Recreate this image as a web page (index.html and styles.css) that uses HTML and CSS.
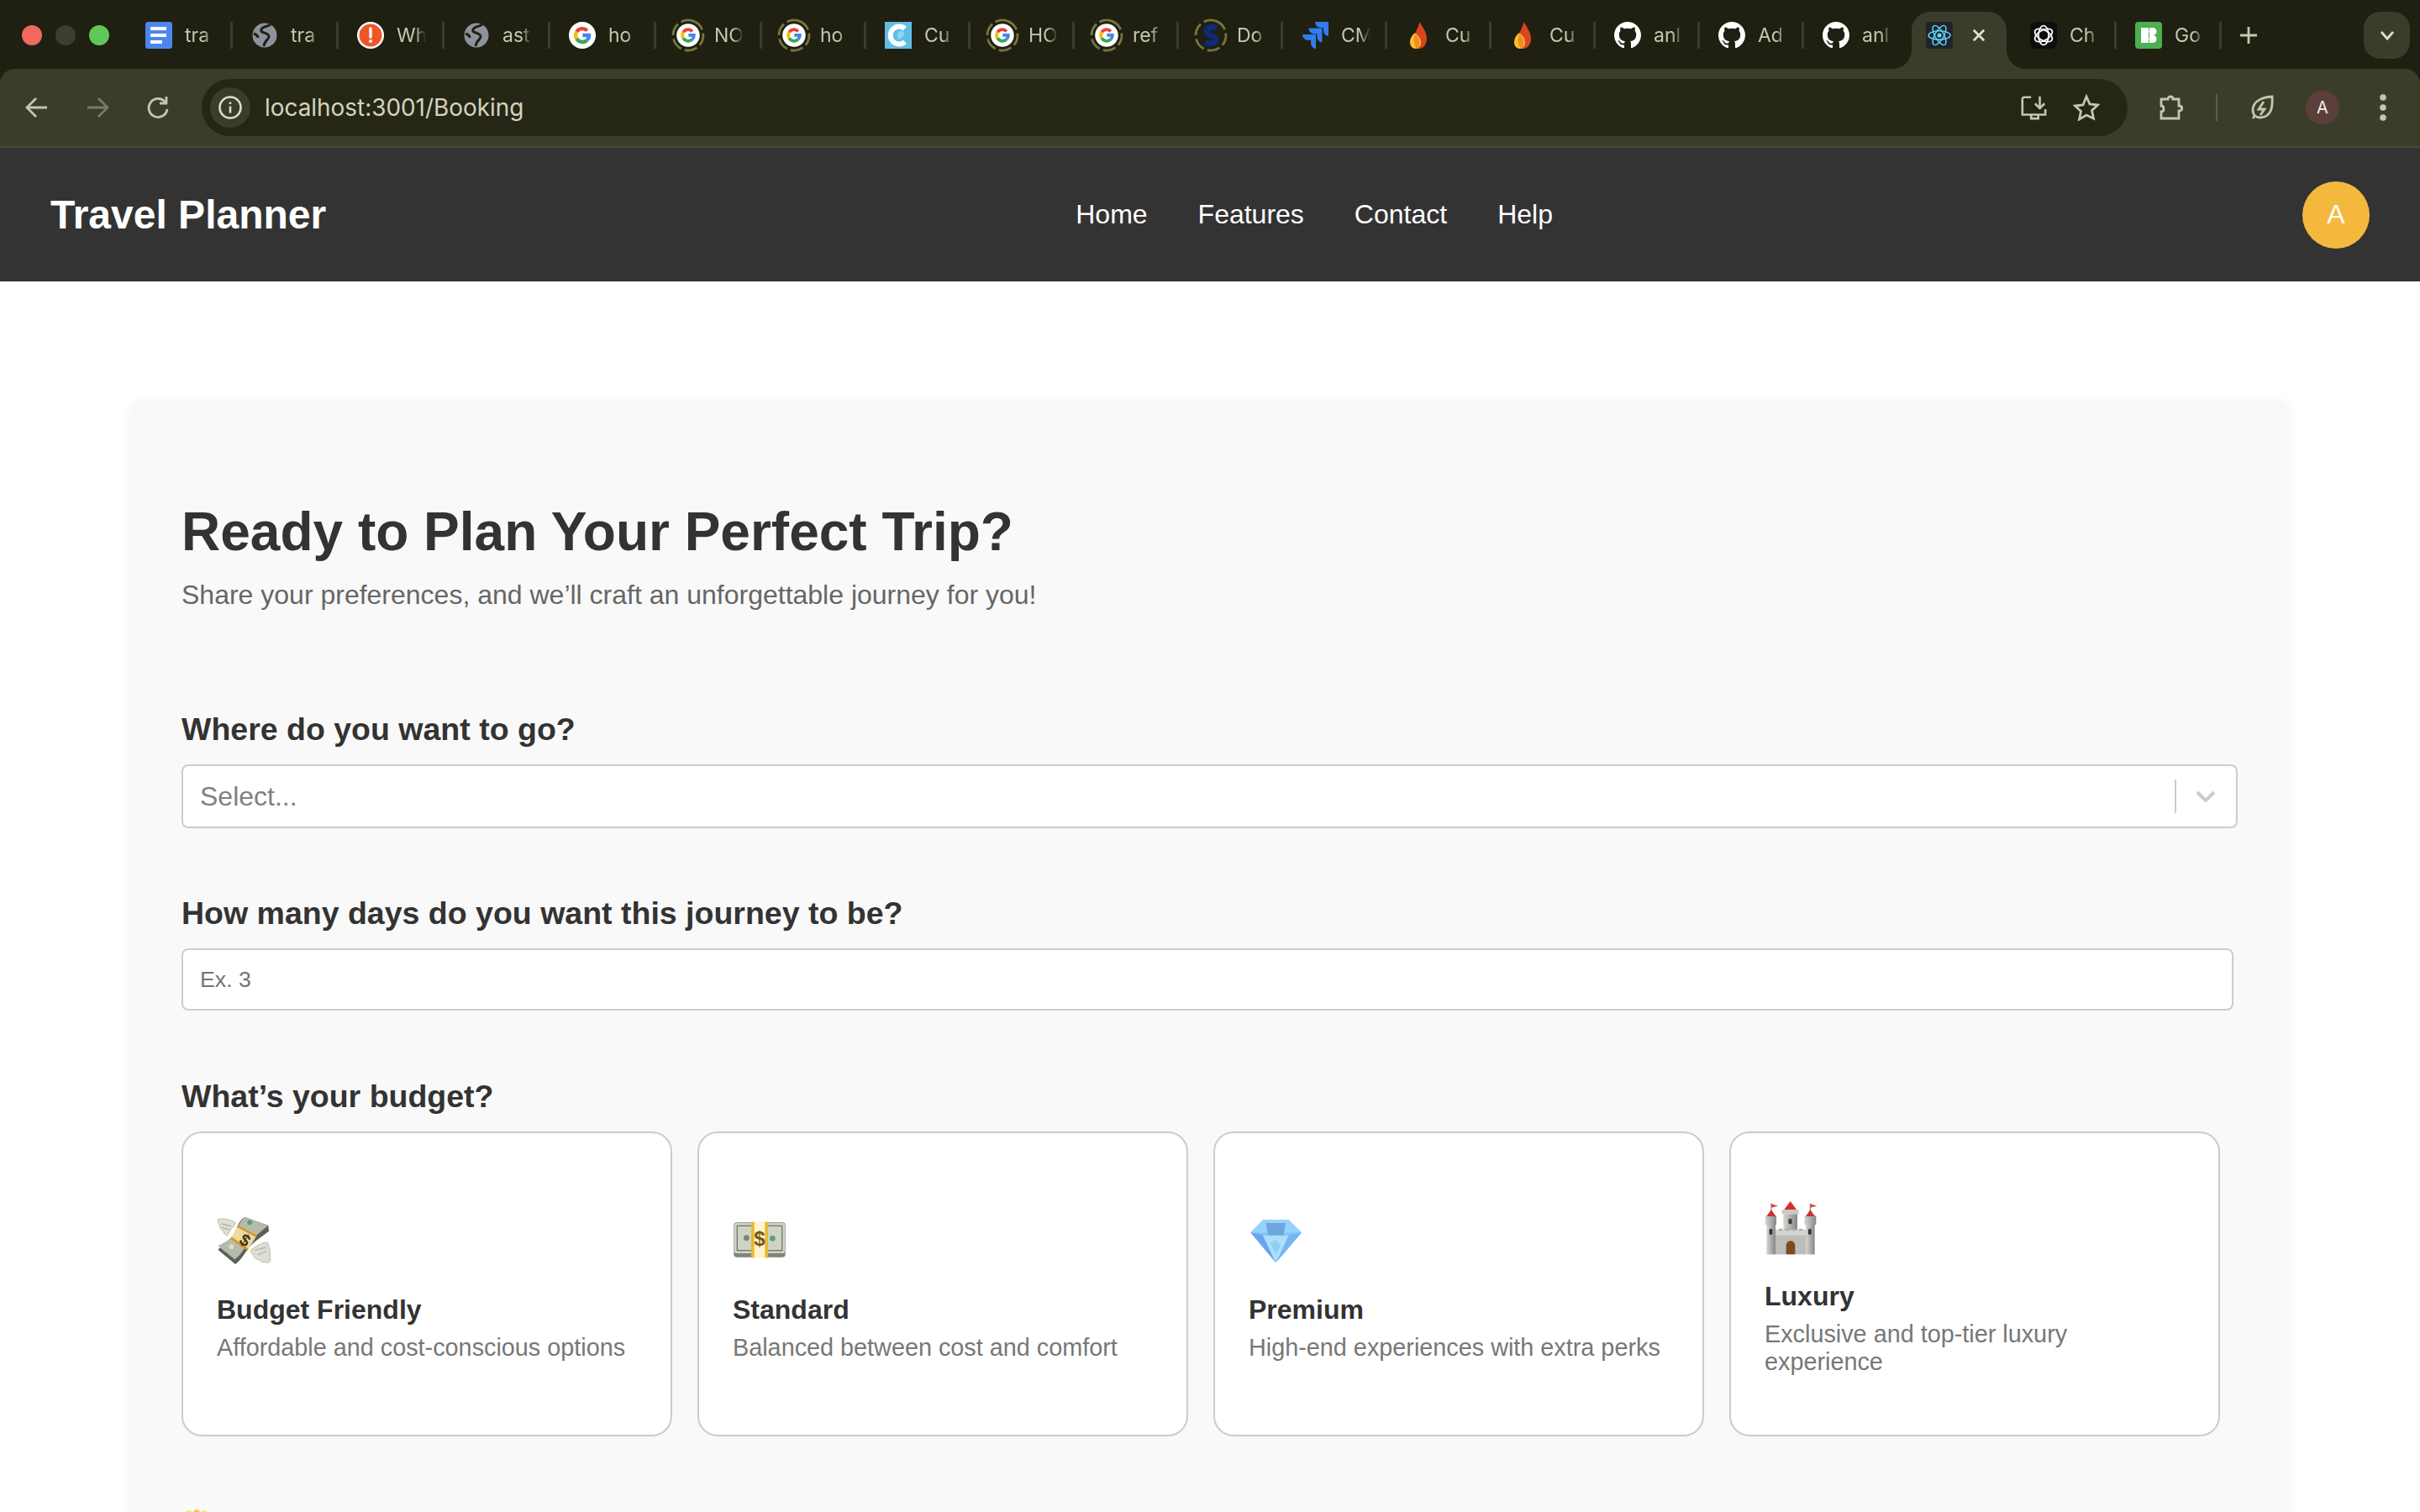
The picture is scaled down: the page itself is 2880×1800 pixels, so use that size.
FILE: index.html
```html
<!DOCTYPE html>
<html>
<head>
<meta charset="utf-8">
<title>Travel Planner</title>
<link rel="stylesheet" href="styles.css">
</head>
<body>

<svg class="icon-defs" width="0" height="0">
	<defs>
		<g id="i-docs">
			<rect width="32" height="32" rx="3" fill="#4d86ee"/>
			<rect x="6" y="6" width="19" height="4" fill="#fff"/>
			<rect x="6" y="14" width="19" height="4" fill="#fff"/>
			<rect x="6" y="22" width="14" height="4" fill="#fff"/>
		</g>
		<g id="i-globe">
			<circle cx="16" cy="16" r="14.500" fill="#8d929c"/>
			<path d="M23 3c-3 3-9 2-11 6-2 5 8 3 9 8 1 4-5 4-6 12M3 14c3 1 5 2 5 5" fill="none" stroke="#1f2011" stroke-width="3"/>
		</g>
		<g id="i-alert">
			<circle cx="16" cy="16" r="16" fill="#fff"/>
			<circle cx="16" cy="16" r="13.500" fill="#ef5527"/>
			<path d="M16 8v10" stroke="#fff" stroke-width="3.400" stroke-linecap="round"/>
			<circle cx="16" cy="23" r="2" fill="#fff"/>
		</g>
		<g id="i-google">
			<circle cx="16" cy="16" r="16" fill="#fff"/>
			<g fill="none" stroke-width="4.400">
				<path d="M9.300 11.800A8 8 0 0 1 21.800 10.600" stroke="#ea4335"/>
				<path d="M9.300 11.800A8 8 0 0 0 9.300 20.200" stroke="#fbbc05"/>
				<path d="M9.300 20.200A8 8 0 0 0 21.600 21.800" stroke="#34a853"/>
				<path d="M21.600 21.800A8 8 0 0 0 24 16H16.400" stroke="#4285f4"/>
			</g>
		</g>
		<circle id="i-ring" cx="16" cy="16" r="18" fill="none" stroke="#75773f" stroke-width="2.800" stroke-dasharray="15 4.500" transform="rotate(-70 16 16)"/>
		<g id="i-google-ring">
			<use href="#i-ring"/>
			<use href="#i-google" transform="translate(2.200 2.200) scale(0.86)"/>
		</g>
		<g id="i-cloud">
			<rect width="32" height="32" fill="#62bde4"/>
			<path d="M24 8A10.500 10.500 0 1 0 24 24" fill="none" stroke="#fff" stroke-width="6"/>
			<path d="M16 13c2-3 6-3 7 0 1 3-3 6-6 8-2-2-3-5-1-8z" fill="#8ed6ee"/>
		</g>
		<g id="i-sdoc">
			<path d="M23 8c-4-3-12-2-12 3 0 6 11 5 11 10 0 5-8 6-13 3" fill="none" stroke="#0e2a78" stroke-width="7"/>
		</g>
		<g id="i-jira">
			<path d="M32 0H16c0 4 3 7 7 7h3v3c0 4 3 7 6 7z" fill="#2f7bf0"/>
			<path d="M24.500 7.500H8.500c0 4 3 7 7 7h3v3c0 4 3 7 6 7z" fill="#2f7bf0"/>
			<path d="M17 15H1c0 4 3 7 7 7h3v3c0 4 3 7 6 7z" fill="#2f7bf0"/>
		</g>
		<g id="i-flame">
			<path d="M17 0c2 6 8 11 8 20 0 7-4 12-10 12-5 0-8-4-8-8z" fill="#d8451f"/>
			<path d="M11 13c4 3 7 7 7 12 0 4-3 7-6 7-4 0-7-3-7-8 0-4 2-8 6-11z" fill="#fbc02d"/>
			<path d="M11.500 14c3 3 5 7 5 11 0 3-1 5-3 7-2-2-4-6-4-10 0-3 1-6 2-8z" fill="#f28c28"/>
		</g>
		<g id="i-github">
			<path transform="scale(2)" fill="#fff" d="M8 0C3.580 0 0 3.580 0 8c0 3.540 2.290 6.530 5.470 7.590.4.070.55-.17.55-.38 0-.19-.01-.82-.01-1.490-2.010.37-2.530-.49-2.690-.94-.09-.23-.48-.94-.82-1.130-.28-.15-.68-.52-.01-.53.63-.01 1.080.58 1.230.82.72 1.210 1.870.87 2.330.66.07-.52.28-.87.51-1.070-1.780-.2-3.640-.89-3.640-3.950 0-.87.31-1.590.82-2.150-.08-.2-.36-1.020.08-2.120 0 0 .67-.21 2.200.82.64-.18 1.320-.27 2-.27.68 0 1.360.09 2 .27 1.530-1.040 2.200-.82 2.200-.82.44 1.100.16 1.920.08 2.120.51.56.82 1.270.82 2.150 0 3.070-1.870 3.750-3.650 3.950.29.25.54.73.54 1.480 0 1.070-.01 1.930-.01 2.200 0 .21.15.46.55.38A8.013 8.013 0 0 0 16 8c0-4.420-3.580-8-8-8z"/>
		</g>
		<g id="i-react">
			<rect width="32" height="32" rx="3" fill="#20232a"/>
			<g fill="none" stroke="#61dafb" stroke-width="1.400">
				<ellipse cx="16" cy="16" rx="13" ry="5.200"/>
				<ellipse cx="16" cy="16" rx="13" ry="5.200" transform="rotate(60 16 16)"/>
				<ellipse cx="16" cy="16" rx="13" ry="5.200" transform="rotate(120 16 16)"/>
			</g>
			<circle cx="16" cy="16" r="2.600" fill="#61dafb"/>
		</g>
		<g id="i-chat">
			<rect width="32" height="32" rx="7" fill="#0d0d0d"/>
			<g fill="none" stroke="#fff" stroke-width="1.700">
				<ellipse cx="16" cy="16" rx="6" ry="11.500"/>
				<ellipse cx="16" cy="16" rx="6" ry="11.500" transform="rotate(60 16 16)"/>
				<ellipse cx="16" cy="16" rx="6" ry="11.500" transform="rotate(120 16 16)"/>
			</g>
		</g>
		<g id="i-green">
			<rect width="32" height="32" rx="4" fill="#4caf50"/>
			<rect x="7" y="7" width="9" height="18" fill="#fff"/>
			<circle cx="21" cy="11.500" r="4.500" fill="#fff"/>
			<circle cx="21" cy="20.500" r="4.500" fill="#fff"/>
			<rect x="17" y="7" width="4" height="18" fill="#fff"/>
		</g>
	</defs>
</svg>

<div class="browser">
	<div class="tabstrip">
		<div class="lights">
			<span class="light light-red"></span>
			<span class="light light-off"></span>
			<span class="light light-green"></span>
		</div>
		<div class="tab"><svg class="fav" viewBox="0 0 32 32"><use href="#i-docs"/></svg><span class="tab-title">tra</span></div>
		<div class="tab"><svg class="fav" viewBox="0 0 32 32"><use href="#i-globe"/></svg><span class="tab-title">tra</span></div>
		<div class="tab"><svg class="fav" viewBox="0 0 32 32"><use href="#i-alert"/></svg><span class="tab-title">Wh</span></div>
		<div class="tab"><svg class="fav" viewBox="0 0 32 32"><use href="#i-globe"/></svg><span class="tab-title">ast</span></div>
		<div class="tab"><svg class="fav" viewBox="0 0 32 32"><use href="#i-google"/></svg><span class="tab-title">ho</span></div>
		<div class="tab"><svg class="fav" viewBox="0 0 32 32"><use href="#i-google-ring"/></svg><span class="tab-title">NO</span></div>
		<div class="tab tab-n"><svg class="fav" viewBox="0 0 32 32"><use href="#i-google-ring"/></svg><span class="tab-title">ho</span></div>
		<div class="tab tab-n"><svg class="fav" viewBox="0 0 32 32"><use href="#i-cloud"/></svg><span class="tab-title">Cu</span></div>
		<div class="tab tab-n"><svg class="fav" viewBox="0 0 32 32"><use href="#i-google-ring"/></svg><span class="tab-title">HO</span></div>
		<div class="tab tab-n"><svg class="fav" viewBox="0 0 32 32"><use href="#i-google-ring"/></svg><span class="tab-title">ref</span></div>
		<div class="tab tab-n"><svg class="fav" viewBox="0 0 32 32"><use href="#i-ring"/><use href="#i-sdoc"/></svg><span class="tab-title">Do</span></div>
		<div class="tab tab-n"><svg class="fav" viewBox="0 0 32 32"><use href="#i-jira"/></svg><span class="tab-title">CM</span></div>
		<div class="tab tab-n"><svg class="fav" viewBox="0 0 32 32"><use href="#i-flame"/></svg><span class="tab-title">Cu</span></div>
		<div class="tab tab-n"><svg class="fav" viewBox="0 0 32 32"><use href="#i-flame"/></svg><span class="tab-title">Cu</span></div>
		<div class="tab tab-n"><svg class="fav" viewBox="0 0 32 32"><use href="#i-github"/></svg><span class="tab-title">anl</span></div>
		<div class="tab tab-n"><svg class="fav" viewBox="0 0 32 32"><use href="#i-github"/></svg><span class="tab-title">Ad</span></div>
		<div class="tab tab-n tab-last"><svg class="fav" viewBox="0 0 32 32"><use href="#i-github"/></svg><span class="tab-title">anl</span></div>
		<div class="tab-active">
			<svg class="fav" viewBox="0 0 32 32"><use href="#i-react"/></svg>
			<svg class="tab-close" viewBox="0 0 18 18"><path d="M2 2l14 14M16 2L2 16"/></svg>
		</div>
		<div class="tab tab-w"><svg class="fav" viewBox="0 0 32 32"><use href="#i-chat"/></svg><span class="tab-title">Ch</span></div>
		<div class="tab tab-w"><svg class="fav" viewBox="0 0 32 32"><use href="#i-green"/></svg><span class="tab-title">Go</span></div>
		<svg class="tab-plus" viewBox="0 0 24 24"><path d="M12 2v20M2 12h20"/></svg>
		<div class="tab-menu">
			<svg viewBox="0 0 20 14"><path d="M3 3l7 8 7-8"/></svg>
		</div>
	</div>

	<div class="toolbar">
		<div class="tool-btn">
			<svg class="tool-icon" viewBox="0 0 32 32"><path d="M28 16H5M15 5L4 16l11 11"/></svg>
		</div>
		<div class="tool-btn tool-dim">
			<svg class="tool-icon" viewBox="0 0 32 32"><path d="M4 16h23M17 5l11 11-11 11"/></svg>
		</div>
		<div class="tool-btn">
			<svg class="tool-icon" viewBox="0 0 32 32"><path d="M25 10a11 11 0 1 0 2 8M26 3v8h-8"/></svg>
		</div>
		<div class="omnibox">
			<div class="site-chip">
				<svg viewBox="0 0 30 30"><circle cx="15" cy="15" r="12.500"/><path d="M15 13.500v8M15 8.500v2.500"/></svg>
			</div>
			<span class="url">localhost:3001/Booking</span>
			<div class="omni-actions">
				<div class="omni-btn">
					<svg class="tool-icon" viewBox="0 0 34 34"><path d="M14 4H5a2 2 0 0 0-2 2v20h29v-7M14 26v5h9v-5M25 3v15M19 12l6 6 6-6"/></svg>
				</div>
				<div class="omni-btn">
					<svg class="tool-icon" viewBox="0 0 32 32"><path d="M16 3l4 9 9.500 1-7 6.500 2 9.500L16 25l-8.500 5 2-9.500-7-6.500 9.500-1z"/></svg>
				</div>
			</div>
		</div>
		<div class="tool-btn tool-first">
			<svg class="tool-icon" viewBox="0 0 32 32"><path d="M4 6h8c0-4 6-4 6 0h7v8c5 0 5 6 0 6v9H4v-8c4 0 4-7 0-7z"/></svg>
		</div>
		<span class="tool-sep"></span>
		<div class="tool-btn">
			<svg class="tool-icon" viewBox="0 0 32 32"><path d="M28 3c1 13-1 24-14 25-5 0-9-3-9-9C5 9 15 4 28 3zM18 9l-6 9h7l-5 7M8 25l-3 4"/></svg>
		</div>
		<div class="tool-btn">
			<span class="profile">A</span>
		</div>
		<div class="tool-btn">
			<svg class="menu-dots" viewBox="0 0 8 32"><circle cx="4" cy="4" r="3.800"/><circle cx="4" cy="16" r="3.800"/><circle cx="4" cy="28" r="3.800"/></svg>
		</div>
	</div>
</div>

<div class="navbar">
	<div class="logo">Travel Planner</div>
	<div class="nav-links">
		<a class="nav-link">Home</a>
		<a class="nav-link">Features</a>
		<a class="nav-link">Contact</a>
		<a class="nav-link">Help</a>
	</div>
	<div class="avatar">A</div>
</div>

<div class="planner">
	<h1 class="planner-title">Ready to Plan Your Perfect Trip?</h1>
	<p class="planner-sub">Share your preferences, and we’ll craft an unforgettable journey for you!</p>

	<div class="field field-tight">
		<label class="field-label">Where do you want to go?</label>
		<div class="select-box">
			<span class="select-text">Select...</span>
			<span class="select-sep"></span>
			<svg class="select-arrow" viewBox="0 0 24 14"><path d="M2 2l10 10L22 2"/></svg>
		</div>
	</div>

	<div class="field">
		<label class="field-label">How many days do you want this journey to be?</label>
		<input class="days-input" type="text" placeholder="Ex. 3">
	</div>

	<div class="field">
		<label class="field-label">What’s your budget?</label>
		<div class="options">
			<div class="option">
				<svg class="option-icon" viewBox="54 78 192 192">
					<path d="M58 95c20-6 45 0 63 12-4 10-10 16-16 22l-14 24c-8-4-14-10-14-16-6-4-12-10-12-18-4-6-7-14-7-24z" fill="#dedfd2" stroke="#a6a694" stroke-width="2"/>
					<path d="M70 110l35 10M72 124l28 8" stroke="#98988a" stroke-width="2.500" fill="none"/>
					<path d="M175 205c20-16 45-30 60-28 8 20 12 45 9 68-6 6-14 6-20 2-8 2-15-2-20-8-10 0-20-8-29-34z" fill="#dedfd2" stroke="#a6a694" stroke-width="2"/>
					<path d="M190 205l40-10M200 222l32-14" stroke="#98988a" stroke-width="2.500" fill="none"/>
					<path d="M58 203l62 52c28-18 36-52 70-80l50-38-2-20-84-30c-30 14-26 60-58 82z" fill="#5d6058"/>
					<path d="M58 190l60 48c28-18 36-52 68-78l50-42-80-32c-28 16-26 60-58 82z" fill="#b4bbaa"/>
					<circle cx="172" cy="106" r="9" fill="#5f9c80"/>
					<circle cx="106" cy="192" r="9" fill="#d9ddcf"/>
					<path d="M127 119l68 36-30 48-60-42z" fill="#ecdca4"/>
					<path d="M127 119l68 36M105 161l60 42" stroke="#d49a1e" stroke-width="8" fill="none"/>
					<text class="emoji-sign emoji-sign-dark" x="0" y="0" font-size="60" transform="translate(130 178) rotate(32)">$</text>
				</svg>
				<h3 class="option-title">Budget Friendly</h3>
				<p class="option-desc">Affordable and cost-conscious options</p>
			</div>
			<div class="option">
				<svg class="option-icon" viewBox="36 78 192 192">
					<rect x="40" y="106" width="184" height="124" rx="10" fill="#7f8477"/>
					<rect x="42" y="108" width="180" height="108" rx="6" fill="#cfd3c5"/>
					<rect x="52" y="118" width="160" height="88" fill="none" stroke="#73796c" stroke-width="4"/>
					<circle cx="85" cy="161" r="10" fill="#7d8277"/>
					<circle cx="178" cy="163" r="10" fill="#5c9f7f"/>
					<rect x="102" y="104" width="60" height="128" fill="#fdf3cd"/>
					<rect x="102" y="104" width="11" height="128" fill="#eab72e"/>
					<rect x="151" y="104" width="11" height="128" fill="#eab72e"/>
					<text class="emoji-sign" x="132" y="190" font-size="72" text-anchor="middle">$</text>
				</svg>
				<h3 class="option-title">Standard</h3>
				<p class="option-desc">Balanced between cost and comfort</p>
			</div>
			<div class="option">
				<svg class="option-icon" viewBox="48 78 192 192">
					<path d="M100 96h90l47 46-92 108-90-108z" fill="#86c5f8"/>
					<path d="M100 96h90l47 46H55z" fill="#96d2fb"/>
					<path d="M110 108h70l-8 48h-54z" fill="#6da6e2"/>
					<path d="M55 142l90 108-46-100z" fill="#6ba4ee"/>
					<path d="M237 142l-92 108 46-100z" fill="#78b4f2"/>
					<path d="M99 152h92l-46 98z" fill="#addefb"/>
					<path d="M125 180l20-12 18 22-18 30z" fill="#91cff7"/>
				</svg>
				<h3 class="option-title">Premium</h3>
				<p class="option-desc">High-end experiences with extra perks</p>
			</div>
			<div class="option">
				<svg class="option-icon" viewBox="63 28 192 192">
					<defs>
						<linearGradient id="stone" x1="0" y1="0" x2="1" y2="0">
							<stop offset="0" stop-color="#d6d7d1"/>
							<stop offset="1" stop-color="#85878a"/>
						</linearGradient>
					</defs>
					<path d="M87 60V36M226 60V36" stroke="#555" stroke-width="2.500"/>
					<path d="M87 37l24 8-24 6zM226 37l24 8-24 6z" fill="#d9443c"/>
					<rect x="125" y="58" width="60" height="16" fill="#c8c9c3"/>
					<rect x="130" y="74" width="50" height="60" fill="url(#stone)"/>
					<path d="M133 58l22-30 22 30z" fill="#d32f28"/>
					<rect x="148" y="90" width="13" height="20" rx="6" fill="#3b3d3a"/>
					<rect x="100" y="130" width="110" height="88" fill="#bdbeb8"/>
					<rect x="100" y="132" width="110" height="18" fill="#d4d5cf"/>
					<path d="M114 126h12v8h-12zM138 126h12v8h-12zM162 126h12v8h-12zM186 126h12v8h-12z" fill="#adaea8"/>
					<rect x="70" y="108" width="32" height="110" fill="url(#stone)"/>
					<rect x="65" y="80" width="40" height="32" fill="url(#stone)"/>
					<path d="M70 82l17-24 16 24z" fill="#d32f28"/>
					<rect x="80" y="126" width="11" height="22" rx="5" fill="#333"/>
					<rect x="210" y="108" width="32" height="110" fill="url(#stone)"/>
					<rect x="205" y="80" width="42" height="32" fill="url(#stone)"/>
					<path d="M210 82l16-24 17 24z" fill="#d32f28"/>
					<rect x="219" y="126" width="11" height="22" rx="5" fill="#333"/>
					<path d="M140 218v-32c0-22 32-22 32 0v32z" fill="#7a4c24"/>
				</svg>
				<h3 class="option-title">Luxury</h3>
				<p class="option-desc">Exclusive and top-tier luxury experience</p>
			</div>
		</div>
	</div>

	<svg class="next-emoji" viewBox="0 0 36 12">
		<circle cx="7" cy="6" r="4" fill="#fbe678"/>
		<circle cx="16" cy="5" r="4" fill="#fbc94e"/>
		<circle cx="25" cy="6" r="4" fill="#fbe678"/>
	</svg>
</div>

</body>
</html>
```

FILE: styles.css
```css
html, body {
	margin: 0;
	height: 1800px;
	overflow: hidden;
	background-color: #fff;
	font-family: "Liberation Sans", Arial, sans-serif;
	color: #333;
}

.icon-defs {
	display: block;
	height: 0;
}

/* browser chrome */
.browser {
	background-color: #1f2011;
	font-family: Inter, "Liberation Sans", sans-serif;
}

.tabstrip {
	display: flex;
	align-items: center;
	height: 80px;
	padding-top: 2px;
}

.lights {
	display: flex;
	gap: 16px;
	margin-left: 26px;
	margin-right: 21px;
}

.light {
	width: 24px;
	height: 24px;
	border-radius: 50%;
}

.light-red { background-color: #f0695f; }
.light-off { background-color: #3c3e30; }
.light-green { background-color: #5fc859; }

.tab {
	box-sizing: border-box;
	display: flex;
	align-items: center;
	gap: 15px;
	width: 126px;
	height: 32px;
	padding-left: 22px;
	border-right: 3px solid #3b3d2a;
}

.tab-n { width: 124px; }
.tab-w { width: 125px; }
.tab-last { border-right-color: transparent; }

.fav {
	flex: none;
	width: 32px;
	height: 32px;
	overflow: visible;
}

/* the fade stands in for chrome cutting off the title */
.tab-title {
	width: 38px;
	white-space: nowrap;
	font-size: 23px;
	color: #c6c8af;
	-webkit-mask-image: linear-gradient(to right, #000 58%, transparent 92%);
	mask-image: linear-gradient(to right, #000 58%, transparent 92%);
}

.tab-active {
	position: relative;
	box-sizing: border-box;
	align-self: flex-end;
	display: flex;
	align-items: flex-start;
	width: 113px;
	height: 68px;
	margin-left: 4px;
	margin-right: 6px;
	padding: 12px 0 0 17px;
	background-color: #3b3d2a;
	border-radius: 22px 22px 0 0;
}

.tab-active::before,
.tab-active::after {
	content: "";
	position: absolute;
	bottom: 0;
	width: 22px;
	height: 22px;
}

.tab-active::before {
	left: -22px;
	background: radial-gradient(circle at 0 0, transparent 21.500px, #3b3d2a 22px);
}

.tab-active::after {
	right: -22px;
	background: radial-gradient(circle at 100% 0, transparent 21.500px, #3b3d2a 22px);
}

.tab-close {
	width: 16px;
	height: 16px;
	margin: 8px 0 0 23px;
	fill: none;
	stroke: #e0e1cc;
	stroke-width: 3;
}

.tab-plus {
	width: 24px;
	height: 24px;
	margin-left: 20px;
	fill: none;
	stroke: #c6c8af;
	stroke-width: 2.800;
}

.tab-menu {
	align-self: flex-start;
	display: flex;
	align-items: center;
	justify-content: center;
	width: 55px;
	height: 56px;
	margin: 12px 12px 0 auto;
	background-color: #3b3d2a;
	border-radius: 20px;
}

.tab-menu svg {
	width: 20px;
	height: 14px;
	fill: none;
	stroke: #dcdec8;
	stroke-width: 2.800;
}

.toolbar {
	display: flex;
	align-items: center;
	height: 92px;
	padding-left: 8px;
	background-color: #3b3d2a;
	border-radius: 18px 18px 0 0;
	border-bottom: 2px solid #4a4c39;
}

.tool-btn {
	flex: none;
	display: flex;
	align-items: center;
	justify-content: center;
	width: 72px;
	height: 68px;
}

.tool-dim { opacity: 0.45; }
.tool-first { margin-left: 16px; }

.tool-icon {
	width: 32px;
	height: 32px;
	fill: none;
	stroke: #c4c6ad;
	stroke-width: 2.800;
}

.tool-sep {
	flex: none;
	width: 2px;
	height: 32px;
	margin: 0 17px;
	background-color: #5b5d49;
}

.omnibox {
	flex: none;
	box-sizing: border-box;
	display: flex;
	align-items: center;
	width: 2292px;
	height: 68px;
	margin-left: 16px;
	padding-left: 10px;
	background-color: #252616;
	border-radius: 34px;
}

.site-chip {
	display: flex;
	align-items: center;
	justify-content: center;
	width: 48px;
	height: 48px;
	background-color: #3b3d2a;
	border-radius: 50%;
}

.site-chip svg {
	width: 30px;
	height: 30px;
	fill: none;
	stroke: #dcdec8;
	stroke-width: 2.600;
}

.url {
	margin-left: 17px;
	font-size: 27.900px;
	color: #d2d4bc;
}

.omni-actions {
	display: flex;
	gap: 7px;
	margin-left: auto;
	margin-right: 21px;
}

.omni-btn {
	display: flex;
	align-items: center;
	justify-content: center;
	width: 56px;
	height: 56px;
}

.profile {
	display: flex;
	align-items: center;
	justify-content: center;
	width: 40px;
	height: 40px;
	border-radius: 50%;
	background-color: #5c3f3a;
	color: #f2ece6;
	font-size: 20px;
}

.menu-dots {
	width: 8px;
	height: 32px;
	fill: #c4c6ad;
}

/* app header */
.navbar {
	display: flex;
	align-items: center;
	justify-content: space-between;
	height: 159px;
	padding: 0 60px;
	background-color: #333;
	color: #fff;
}

.logo {
	font-size: 48px;
	font-weight: bold;
}

.nav-links {
	display: flex;
	gap: 60px;
}

.nav-link {
	font-size: 32px;
	color: #fff;
}

.avatar {
	display: flex;
	align-items: center;
	justify-content: center;
	width: 80px;
	height: 80px;
	border-radius: 50%;
	background-color: #f4b93c;
	font-size: 32px;
}

/* form card */
.planner {
	box-sizing: border-box;
	width: 2568px;
	height: 1600px;
	margin: 140px auto 0;
	padding: 121px 60px 60px;
	background-color: #f9f9f9;
	border-radius: 16px;
	box-shadow: 0 4px 16px rgba(0, 0, 0, 0.06);
}

.planner-title {
	margin: 0 0 20px;
	font-size: 64px;
	line-height: 74px;
	font-weight: bold;
	color: #333;
}

.planner-sub {
	margin: 0 0 120px;
	font-size: 32px;
	line-height: 36px;
	color: #666;
}

.field {
	margin-bottom: 80px;
}

.field-tight {
	margin-bottom: 79px;
}

.field-label {
	display: block;
	margin-bottom: 20px;
	font-size: 37.500px;
	line-height: 44px;
	font-weight: bold;
	color: #333;
}

.select-box {
	box-sizing: border-box;
	display: flex;
	align-items: center;
	width: 2447px;
	height: 76px;
	padding-left: 20px;
	background-color: #fff;
	border: 2px solid #ccc;
	border-radius: 8px;
}

.select-text {
	flex: 1;
	font-size: 32px;
	color: #808080;
}

.select-sep {
	width: 2px;
	height: 40px;
	background-color: #ccc;
}

.select-arrow {
	width: 24px;
	height: 14px;
	margin: 0 24px 0 23px;
	fill: none;
	stroke: #ccc;
	stroke-width: 4;
}

.days-input {
	display: block;
	box-sizing: border-box;
	width: 2442px;
	height: 74px;
	padding: 0 20px;
	background-color: #fff;
	border: 2px solid #ccc;
	border-radius: 8px;
	font-family: "Liberation Sans", Arial, sans-serif;
	font-size: 26.700px;
	outline: none;
}

.days-input::placeholder {
	color: #757575;
}

.options {
	display: grid;
	grid-template-columns: repeat(4, 584px);
	gap: 30px;
}

.option {
	box-sizing: border-box;
	display: flex;
	flex-direction: column;
	justify-content: center;
	height: 363px;
	padding: 0 40px;
	background-color: #fff;
	border: 2px solid #ccc;
	border-radius: 24px;
}

.option-icon {
	display: block;
	width: 64px;
	height: 64px;
	margin: 10px 0 29px;
	flex: none;
}

.emoji-sign {
	font-family: "Liberation Sans", Arial, sans-serif;
	font-weight: bold;
	fill: #7a5412;
}

.emoji-sign-dark {
	fill: #4a3208;
}

.option-title {
	margin: 0 0 9px;
	font-size: 32px;
	line-height: 40px;
	font-weight: bold;
	color: #333;
}

.option-desc {
	margin: 0;
	font-size: 28.800px;
	line-height: 33px;
	color: #777;
}

.next-emoji {
	display: block;
	width: 36px;
	height: 12px;
	margin: 86px 0 0 2px;
}
```
